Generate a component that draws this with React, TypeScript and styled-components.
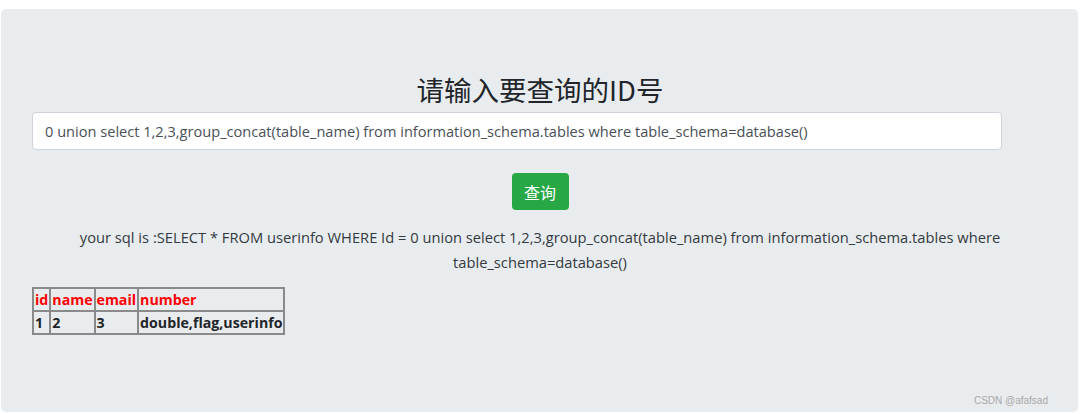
import React from "react";
import styled, { createGlobalStyle } from "styled-components";

const Global = createGlobalStyle`
  html, body { margin: 0; padding: 0; background: #ffffff; }
  body { font-family: "Open Sans", "Noto Sans CJK SC", sans-serif; color: #212529; }
`;

const Page = styled.div`
  width: 1080px;
  height: 414px;
  box-sizing: border-box;
  padding: 9px 2px 2px 1px;
`;

const Jumbotron = styled.div`
  position: relative;
  height: 100%;
  box-sizing: border-box;
  background: #e9ecef;
  border-radius: 5px;
  padding: 62px 30px 0 31px;
  display: flex;
  flex-direction: column;
`;

const Title = styled.h3`
  margin: 0 0 5px;
  text-align: center;
  font-family: "Noto Sans CJK SC", sans-serif;
  font-weight: 400;
  font-size: 27.5px;
  line-height: 36px;
  color: #212529;
`;

const Form = styled.form`
  display: flex;
  flex-direction: column;
  align-items: center;
  margin: 0;
`;

const Input = styled.input`
  align-self: flex-start;
  width: 970px;
  height: 38px;
  box-sizing: border-box;
  border: 1px solid #ced4da;
  border-radius: 4px;
  background: #ffffff;
  padding: 0 12px;
  font-family: "Open Sans", sans-serif;
  font-size: 14.6px;
  color: #495057;
  outline: none;
`;

const Button = styled.button`
  margin-top: 23px;
  width: 57px;
  height: 37px;
  border: none;
  border-radius: 4px;
  background: #28a745;
  color: #ffffff;
  font-family: "Noto Sans CJK SC", sans-serif;
  font-size: 16px;
  padding: 0;
`;

const SqlText = styled.p`
  margin: 15px 0 0;
  padding: 0 20px;
  text-align: center;
  font-family: "Open Sans", sans-serif;
  font-size: 14.7px;
  line-height: 25px;
  color: #343a40;
`;

const Table = styled.table`
  margin-top: 12px;
  border: 1px solid #8a8a8a;
  border-spacing: 0;
  align-self: flex-start;
`;

const Cell = styled.td<{ $head?: boolean }>`
  border: 1px solid #8a8a8a;
  padding: 0 1px;
  height: 21px;
  font-family: "Open Sans", sans-serif;
  font-weight: 700;
  font-size: 14.2px;
  line-height: 21px;
  color: ${(p) => (p.$head ? "#ff0000" : "#212529")};
`;

const Watermark = styled.div`
  position: absolute;
  right: 30px;
  bottom: 6px;
  font-family: "Liberation Sans", sans-serif;
  font-size: 10px;
  color: #a8a8a8;
`;

const query =
  "0 union select 1,2,3,group_concat(table_name) from information_schema.tables where table_schema=database()";

export default function App() {
  return (
    <>
      <Global />
      <Page>
        <Jumbotron>
          <Title>请输入要查询的ID号</Title>
          <Form onSubmit={(e) => e.preventDefault()}>
            <Input defaultValue={query} />
            <Button type="submit">查询</Button>
          </Form>
          <SqlText>your sql is :SELECT * FROM userinfo WHERE Id = {query}</SqlText>
          <Table>
            <tbody>
              <tr>
                <Cell $head>id</Cell>
                <Cell $head>name</Cell>
                <Cell $head>email</Cell>
                <Cell $head>number</Cell>
              </tr>
              <tr>
                <Cell>1</Cell>
                <Cell>2</Cell>
                <Cell>3</Cell>
                <Cell>double,flag,userinfo</Cell>
              </tr>
            </tbody>
          </Table>
          <Watermark>CSDN @afafsad</Watermark>
        </Jumbotron>
      </Page>
    </>
  );
}
